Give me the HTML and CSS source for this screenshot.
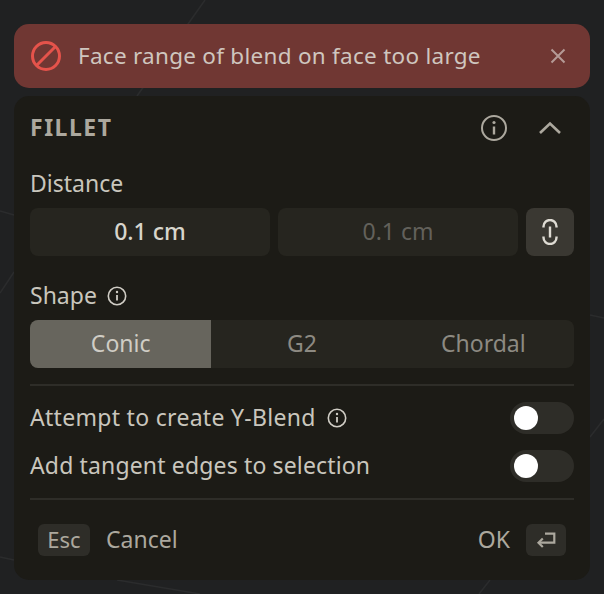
FILE: index.html
```html
<!DOCTYPE html>
<html lang="en">
<head>
    <meta charset="UTF-8">
    <meta name="viewport" content="width=device-width, initial-scale=1.0">
    <title>Fillet</title>
    <link rel="stylesheet" href="styles.css">
</head>
<body>

    <!-- Faint model edges behind the dialog -->
    <svg class="backdrop" width="604" height="594" viewBox="0 0 604 594" fill="none" stroke="#2b2c2d" stroke-width="1.5">
        <path d="M205 0L137 96"/>
        <path d="M0 211L14 215"/>
        <path d="M14 272L0 293"/>
        <path d="M0 557L14 560"/>
        <path d="M117 580L200 594"/>
        <path d="M590 315L604 318"/>
        <path d="M604 419L590 437"/>
        <path d="M490 580L479 594"/>
    </svg>

    <div class="stack">
        <!-- Error banner -->
        <div class="banner">
            <svg class="banner-icon" width="32" height="32" viewBox="0 0 32 32" fill="none" stroke="#e5534b" stroke-width="3">
                <circle cx="16" cy="16" r="13.5"/>
                <path d="M6.5 25.5L25.5 6.5"/>
            </svg>
            <span class="banner-text">Face range of blend on face too large</span>
            <svg class="banner-close" width="16" height="16" viewBox="0 0 16 16" fill="none" stroke="#b59a96" stroke-width="2">
                <path d="M1.5 1.5L14.5 14.5M14.5 1.5L1.5 14.5"/>
            </svg>
        </div>

        <!-- Fillet panel -->
        <div class="panel">
            <div class="panel-head">
                <h2>FILLET</h2>
                <div class="head-icons">
                    <svg width="28" height="28" viewBox="0 0 28 28" fill="none" stroke="#aca89e" stroke-width="2">
                        <circle cx="14" cy="14" r="12"/>
                        <path d="M14 12.5V20.5" stroke-width="2.4"/>
                        <circle cx="14" cy="8.5" r="1.6" fill="#aca89e" stroke="none"/>
                    </svg>
                    <svg width="24" height="16" viewBox="0 0 24 16" fill="none" stroke="#aca89e" stroke-width="2.6">
                        <path d="M2 13L12 3.5L22 13"/>
                    </svg>
                </div>
            </div>

            <label class="field-label">Distance</label>
            <div class="distance">
                <div class="value">0.1 cm</div>
                <div class="value muted">0.1 cm</div>
                <button class="link-btn">
                    <svg width="16" height="26" viewBox="0 0 16 26" fill="none" stroke="#dedbd3" stroke-width="2.4">
                        <path d="M1.5 8.5V7.5A6.5 6.5 0 0 1 14.5 7.5V8.5"/>
                        <path d="M1.5 17.5V18.5A6.5 6.5 0 0 0 14.5 18.5V17.5"/>
                        <path d="M8 7.5V18.5"/>
                    </svg>
                </button>
            </div>

            <div class="field-label shape-label">
                Shape
                <svg class="info" width="20" height="20" viewBox="0 0 20 20" fill="none" stroke="#d0cdc5" stroke-width="1.6">
                    <circle cx="10" cy="10" r="8.7"/>
                    <path d="M10 9V14.5" stroke-width="1.8"/>
                    <circle cx="10" cy="6" r="1.2" fill="#d0cdc5" stroke="none"/>
                </svg>
            </div>
            <div class="segments">
                <div class="segment active">Conic</div>
                <div class="segment">G2</div>
                <div class="segment">Chordal</div>
            </div>

            <hr class="rule">

            <div class="option">
                <span class="option-label">
                    Attempt to create Y-Blend
                    <svg class="info" width="20" height="20" viewBox="0 0 20 20" fill="none" stroke="#d0cdc5" stroke-width="1.6">
                        <circle cx="10" cy="10" r="8.7"/>
                        <path d="M10 9V14.5" stroke-width="1.8"/>
                        <circle cx="10" cy="6" r="1.2" fill="#d0cdc5" stroke="none"/>
                    </svg>
                </span>
                <span class="toggle"><span class="knob"></span></span>
            </div>
            <div class="option">
                <span class="option-label tight">Add tangent edges to selection</span>
                <span class="toggle"><span class="knob"></span></span>
            </div>

            <hr class="rule rule-low">

            <div class="panel-foot">
                <div class="foot-side">
                    <kbd class="key">Esc</kbd>
                    <span class="foot-text">Cancel</span>
                </div>
                <div class="foot-side">
                    <span class="foot-text">OK</span>
                    <kbd class="key key-enter">
                        <svg width="20" height="16" viewBox="0 0 20 16" fill="none" stroke="#aca89e" stroke-width="2.2">
                            <path d="M9 1.7H18.3V10.7H3"/>
                            <path d="M6.8 6.5L2.5 10.7L6.8 15"/>
                        </svg>
                    </kbd>
                </div>
            </div>
        </div>
    </div>

</body>
</html>
```

FILE: styles.css
```css
body {
    margin: 0;
    width: 604px;
    height: 594px;
    overflow: hidden;
    background-color: #202122;
    font-family: "Noto Sans", sans-serif;
    font-size: 23px;
    color: #c9c6bd;
}
.backdrop {
    position: absolute;
    left: 0;
    top: 0;
}
.stack {
    position: relative;
    display: flex;
    flex-direction: column;
    gap: 8px;
    padding: 24px 14px 0;
}
.banner {
    display: flex;
    align-items: center;
    height: 64px;
    padding: 0 24px 0 16px;
    background: #703733;
    border-radius: 15px;
    color: #cfc6bf;
}
.banner-text {
    margin-left: 16px;
    padding-bottom: 2px;
    flex: 1;
    font-size: 22.5px;
    letter-spacing: 0.27px;
}
.panel {
    display: flex;
    flex-direction: column;
    height: 484px;
    box-sizing: border-box;
    padding: 0 16px;
    background: #1c1b16;
    border-radius: 15px;
}
.panel-head {
    display: flex;
    align-items: center;
    justify-content: space-between;
    height: 64px;
}
.panel-head h2 {
    margin: 0;
    padding-bottom: 2px;
    font-size: 23px;
    font-weight: 700;
    letter-spacing: 1.5px;
    color: #aca89e;
}
.head-icons {
    display: flex;
    align-items: center;
    gap: 30px;
    padding-right: 12px;
}
.field-label {
    display: flex;
    align-items: center;
    height: 32px;
    box-sizing: border-box;
    margin-top: 8px;
    padding-bottom: 2px;
}
.distance {
    display: flex;
    gap: 8px;
    margin-top: 8px;
}
.value {
    flex: 1;
    height: 48px;
    line-height: 46px;
    text-align: center;
    background: #26251f;
    border-radius: 8px;
    font-weight: 500;
    color: #d8d5cc;
}
.value.muted {
    font-weight: 400;
    color: #63615b;
}
.link-btn {
    display: flex;
    align-items: center;
    justify-content: center;
    width: 48px;
    height: 48px;
    padding: 0;
    border: none;
    border-radius: 8px;
    background: #3a3832;
}
.shape-label {
    margin-top: 24px;
    gap: 10px;
}
.info {
    margin-top: 2px;
}
.segments {
    display: flex;
    height: 48px;
    margin-top: 8px;
    background: #26251f;
    border-radius: 8px;
    overflow: hidden;
    color: #8d8a82;
}
.segment {
    flex: 1;
    line-height: 46px;
    text-align: center;
}
.segment.active {
    background: #67655d;
    color: #d0cdc5;
}
.rule {
    width: 100%;
    height: 2px;
    margin: 16px 0 0;
    border: none;
    background: #2e2d28;
}
.rule-low {
    margin-top: 15px;
}
.option {
    display: flex;
    align-items: center;
    justify-content: space-between;
    height: 32px;
    margin-bottom: 16px;
}
.rule + .option {
    margin-top: 16px;
}
.option-label {
    display: flex;
    align-items: center;
    gap: 11px;
    padding-bottom: 2px;
    letter-spacing: 0.3px;
}
.option-label.tight {
    letter-spacing: 0.15px;
}
.toggle {
    display: flex;
    align-items: center;
    width: 64px;
    height: 32px;
    box-sizing: border-box;
    padding-left: 4px;
    background: #2e2d28;
    border-radius: 16px;
}
.knob {
    width: 24px;
    height: 24px;
    background: #fff;
    border-radius: 50%;
}
.option + .rule {
    margin-top: 0;
}
.panel-foot {
    display: flex;
    align-items: center;
    justify-content: space-between;
    height: 32px;
    margin-top: 24px;
    padding: 0 8px;
    color: #aca89e;
}
.foot-side {
    display: flex;
    align-items: center;
    gap: 16px;
}
.foot-text {
    line-height: 30px;
    height: 32px;
}
.key {
    display: flex;
    align-items: center;
    justify-content: center;
    height: 32px;
    width: 52px;
    padding-bottom: 2px;
    box-sizing: border-box;
    background: #2e2d28;
    border-radius: 6px;
    font-family: inherit;
    font-size: 22px;
}
.key-enter {
    width: 40px;
    padding-bottom: 0;
}
```
